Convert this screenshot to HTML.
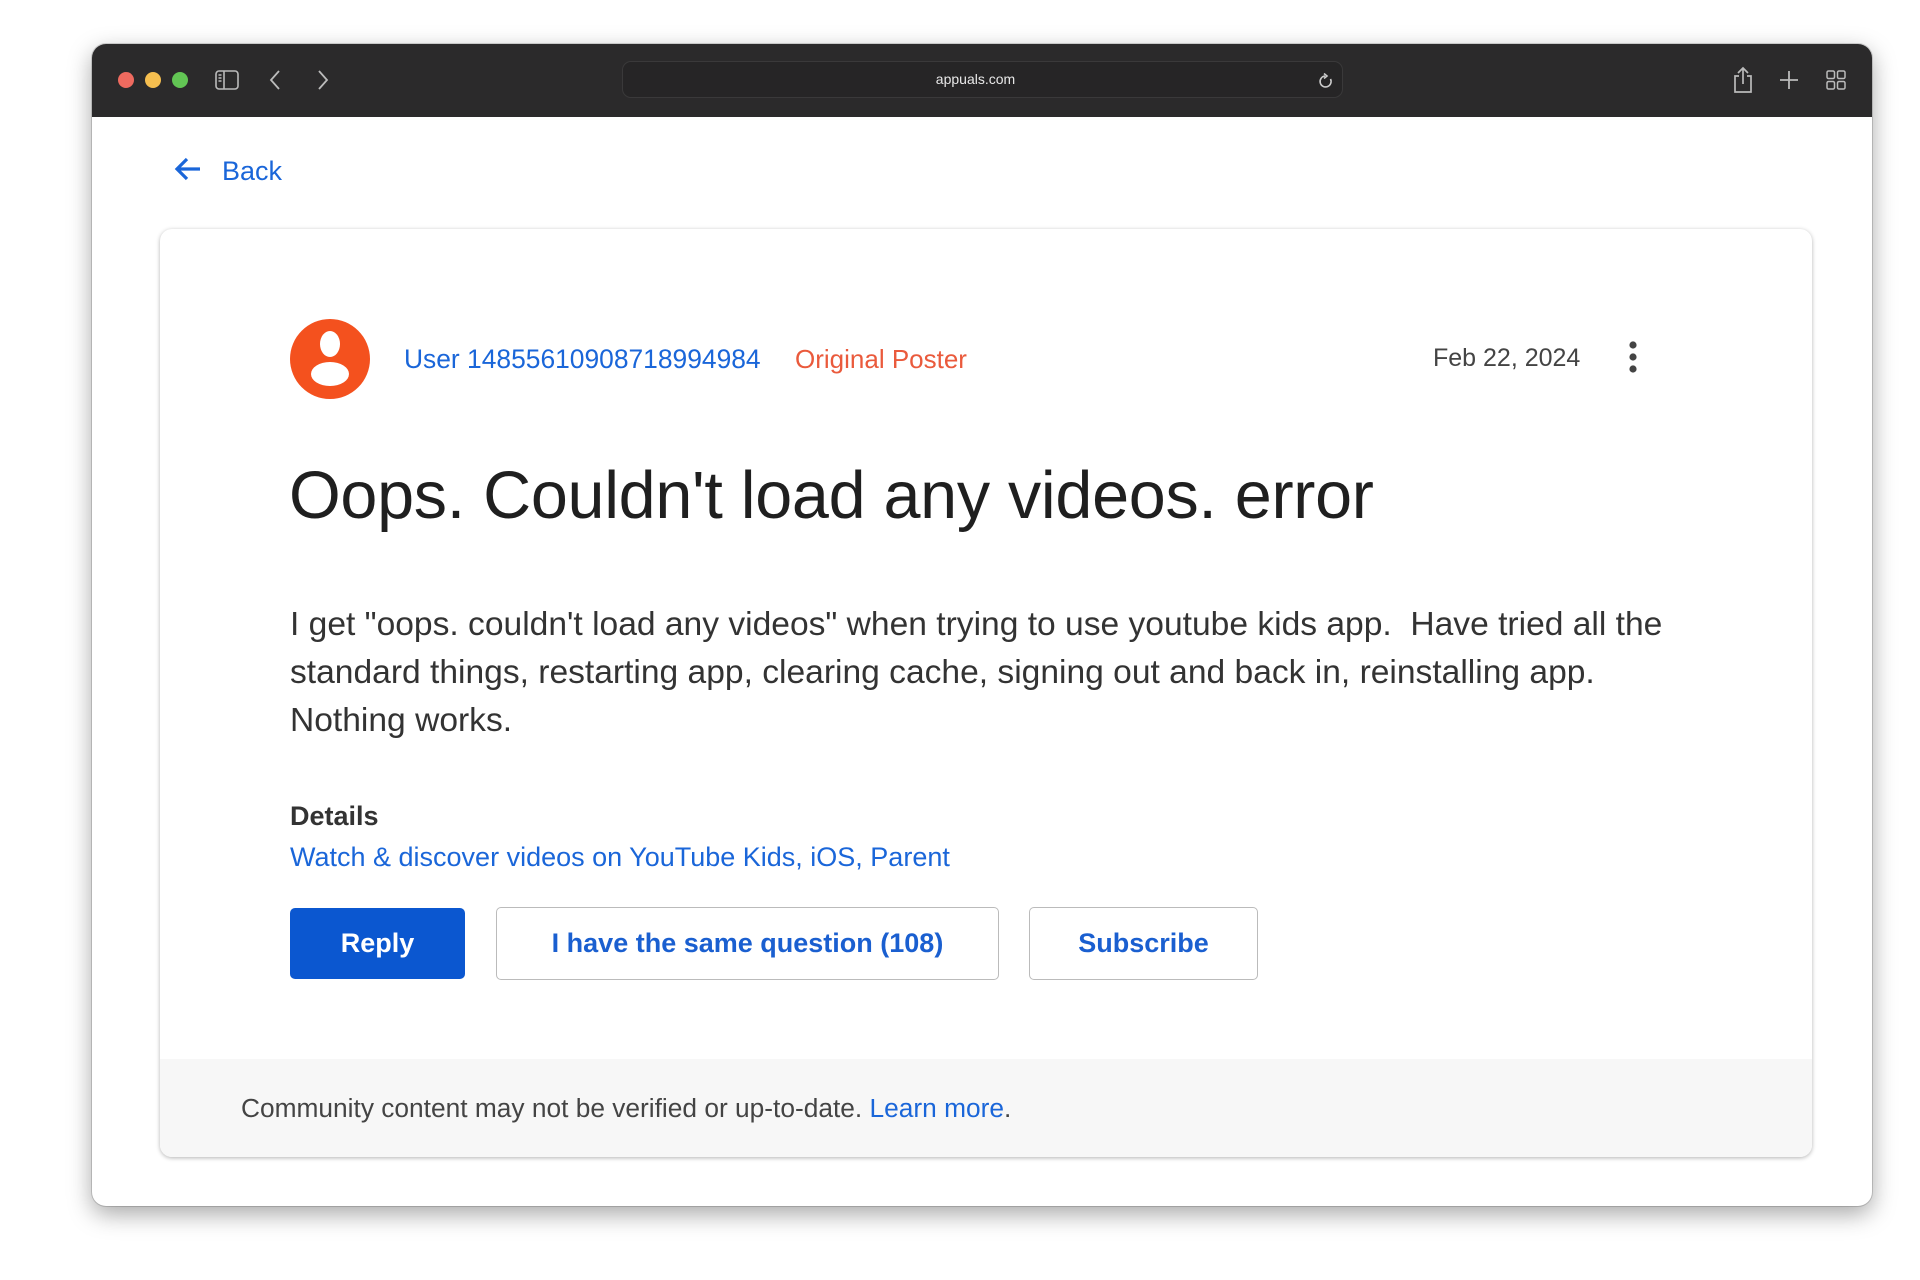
<!DOCTYPE html>
<html><head><meta charset="utf-8"><style>
*{margin:0;padding:0;box-sizing:border-box}
body{width:1920px;height:1280px;background:#fff;position:relative;overflow:hidden;font-family:"Liberation Sans",sans-serif}
.win{position:absolute;left:92px;top:44px;width:1780px;height:1162px;border-radius:14px;background:#fff;box-shadow:0 8px 24px rgba(0,0,0,.35),0 0 0 1px rgba(0,0,0,.15);overflow:hidden}
.bar{position:absolute;left:0;top:0;width:100%;height:73px;background:#2b2a2b}
.dot{position:absolute;top:28px;width:16px;height:16px;border-radius:50%}
.url{position:absolute;left:530px;top:17px;width:721px;height:37px;border-radius:9px;background:#262526;border:1px solid #3a393a;color:#e8e8e8;font-size:14px;text-align:center;line-height:35px;padding-right:14px}
.a{position:absolute;white-space:nowrap}
.card{position:absolute;left:68px;top:185px;width:1652px;height:928px;border-radius:12px;background:#fff;box-shadow:0 1px 4px rgba(0,0,0,.3);overflow:hidden}
.foot{position:absolute;left:0;bottom:0;width:100%;height:98px;background:#f7f7f7}
.btn{position:absolute;top:678px;height:73px;border-radius:5px;font-size:27px;font-weight:bold;text-align:center;line-height:71px}
</style></head><body>
<div class="win">
 <div class="bar">
  <div class="dot" style="left:26px;background:#ee6a5f"></div>
  <div class="dot" style="left:53px;background:#f5be4f"></div>
  <div class="dot" style="left:80px;background:#62c554"></div>
  <svg class="a" style="left:123px;top:26px" width="24" height="20" viewBox="0 0 24 20" fill="none" stroke="#bbb" stroke-width="1.6"><rect x="1" y="1" width="22" height="18" rx="3"/><line x1="9" y1="1" x2="9" y2="19"/><line x1="3.5" y1="5" x2="6.5" y2="5"/><line x1="3.5" y1="8" x2="6.5" y2="8"/><line x1="3.5" y1="11" x2="6.5" y2="11"/></svg>
  <svg class="a" style="left:176px;top:25px" width="14" height="22" viewBox="0 0 14 22" fill="none" stroke="#bbb" stroke-width="1.8"><path d="M11 2 L3 11 L11 20"/></svg>
  <svg class="a" style="left:224px;top:25px" width="14" height="22" viewBox="0 0 14 22" fill="none" stroke="#bbb" stroke-width="1.8"><path d="M3 2 L11 11 L3 20"/></svg>
  <div class="url">appuals.com</div>
  <svg class="a" style="left:1226px;top:28px" width="16" height="18" viewBox="0 0 16 18" fill="none" stroke="#ccc" stroke-width="1.6"><path d="M12.5 7 A5.5 5.5 0 1 1 7 4"/><path d="M6 1.5 L9 4 L6 6.5"/></svg>
  <svg class="a" style="left:1640px;top:22px" width="22" height="28" viewBox="0 0 22 28" fill="none" stroke="#bbb" stroke-width="1.7"><path d="M7 10 H3 V26 H19 V10 H15"/><path d="M11 18 V2 M6 7 L11 2 L16 7"/></svg>
  <svg class="a" style="left:1687px;top:26px" width="20" height="20" viewBox="0 0 20 20" stroke="#bbb" stroke-width="1.8"><path d="M10 1 V19 M1 10 H19"/></svg>
  <svg class="a" style="left:1734px;top:26px" width="20" height="20" viewBox="0 0 20 20" fill="none" stroke="#bbb" stroke-width="1.5"><rect x="1" y="1" width="7.5" height="7.5" rx="1.5"/><rect x="11.5" y="1" width="7.5" height="7.5" rx="1.5"/><rect x="1" y="11.5" width="7.5" height="7.5" rx="1.5"/><rect x="11.5" y="11.5" width="7.5" height="7.5" rx="1.5"/></svg>
 </div>
 <svg class="a" style="left:82px;top:112px" width="28" height="26" viewBox="0 0 28 26" fill="none" stroke="#1a66d9" stroke-width="3.2"><path d="M26 13 H4 M13 3 L3 13 L13 23"/></svg>
 <div class="a" style="left:130px;top:112px;font-size:27px;color:#1a66d9">Back</div>
 <div class="card">
  <svg class="a" style="left:130px;top:90px" width="80" height="80" viewBox="0 0 80 80"><circle cx="40" cy="40" r="40" fill="#f4511e"/><ellipse cx="40" cy="25" rx="10" ry="13" fill="#fff"/><ellipse cx="40" cy="55" rx="19" ry="12" fill="#fff"/></svg>
  <div class="a" style="left:244px;top:115px;font-size:26.4px;color:#1a66d9">User 14855610908718994984</div>
  <div class="a" style="left:635px;top:115px;font-size:26px;color:#ea5a3c">Original Poster</div>
  <div class="a" style="left:1273px;top:115px;font-size:25px;color:#444">Feb 22, 2024</div>
  <svg class="a" style="left:1468px;top:111px" width="10" height="36" viewBox="0 0 10 36" fill="#444"><circle cx="5" cy="5" r="3.6"/><circle cx="5" cy="17" r="3.6"/><circle cx="5" cy="29" r="3.6"/></svg>
  <div class="a" style="left:129px;top:229px;font-size:66.5px;color:#1f1f1f;letter-spacing:-0.3px">Oops. Couldn't load any videos. error</div>
  <div class="a" style="left:130px;top:372px;font-size:33.6px;line-height:48px;color:#333">I get "oops. couldn't load any videos" when trying to use youtube kids app.&nbsp; Have tried all the<br>standard things, restarting app, clearing cache, signing out and back in, reinstalling app.<br>Nothing works.</div>
  <div class="a" style="left:130px;top:572px;font-size:27px;font-weight:bold;color:#333">Details</div>
  <div class="a" style="left:130px;top:613px;font-size:27px;color:#1a66d9">Watch &amp; discover videos on YouTube Kids, iOS, Parent</div>
  <div class="btn" style="left:130px;width:175px;background:#0b57d0;color:#fff;top:679px;height:71px">Reply</div>
  <div class="btn" style="left:336px;width:503px;border:1.5px solid #bbb;color:#1a5fd0">I have the same question (108)</div>
  <div class="btn" style="left:869px;width:229px;border:1.5px solid #bbb;color:#1a5fd0">Subscribe</div>
  <div class="foot"><div class="a" style="left:81px;top:34px;font-size:26.3px;color:#444">Community content may not be verified or up-to-date. <span style="color:#1a66d9">Learn more</span>.</div></div>
 </div>
</div>
</body></html>
